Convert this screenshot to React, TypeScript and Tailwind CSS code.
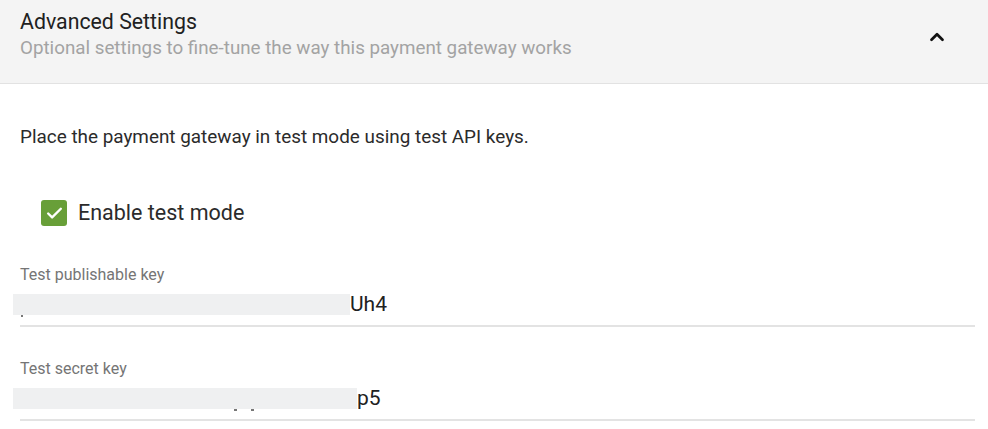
import { ChevronUp, Check } from "lucide-react";

type KeyFieldProps = {
  label: string;
  tail: string;
  maskWidth: string;
  marks: { left: string; w: string }[];
};

function KeyField({ label, tail, maskWidth, marks }: KeyFieldProps) {
  return (
    <div>
      <div className="text-[16px] leading-[20px] text-[#757575]">{label}</div>
      <div className="relative mt-[9px] flex h-[21px] items-center">
        <span className={`-ml-[7px] h-[21px] bg-[#eff0f1] ${maskWidth}`} />
        <span className="text-[21px] leading-[21px] text-[#212121]">{tail}</span>
        {marks.map((m, i) => (
          <span
            key={i}
            className={`absolute top-[21px] h-[2px] bg-[#777] ${m.left} ${m.w}`}
          />
        ))}
      </div>
      <div className="mt-[10px] h-[2px] bg-[#e3e3e3]" />
    </div>
  );
}

export default function App() {
  return (
    <div
      className="min-h-[429px] w-[988px] bg-white"
      style={{ fontFamily: "Roboto, 'Noto Sans', sans-serif" }}
    >
      <div className="flex h-[84px] items-start justify-between border-b border-[#e2e2e2] bg-[#f4f4f4] pl-5 pr-[40px]">
        <div className="pt-[9px]">
          <div className="text-[21.3px] leading-[26px] text-[#212121]">Advanced Settings</div>
          <div className="mt-[1px] text-[18.8px] leading-[24px] text-[#a3a3a3]">
            Optional settings to fine-tune the way this payment gateway works
          </div>
        </div>
        <ChevronUp className="mt-[26px] h-[22px] w-[22px] text-[#111]" strokeWidth={3} />
      </div>

      <div className="pl-5 pr-[13px]">
        <p className="pt-[41px] text-[18.9px] leading-[24px] text-[#2b2b2b]">
          Place the payment gateway in test mode using test API keys.
        </p>

        <label className="mt-[51px] flex items-center gap-[11px] pl-[21px]">
          <span className="flex h-[26px] w-[26px] items-center justify-center rounded-[3px] bg-[#689f38]">
            <Check className="h-[19px] w-[19px] text-white" strokeWidth={3} />
          </span>
          <span className="text-[21.5px] leading-[26px] text-[#2b2b2b]">Enable test mode</span>
        </label>

        <div className="mt-[39px]">
          <KeyField
            label="Test publishable key"
            tail="Uh4"
            maskWidth="w-[337px]"
            marks={[{ left: "left-[1px]", w: "w-[2px]" }]}
          />
          <div className="mt-[32px]">
            <KeyField
              label="Test secret key"
              tail="p5"
              maskWidth="w-[344px]"
              marks={[
                { left: "left-[214px]", w: "w-[3px]" },
                { left: "left-[231px]", w: "w-[3px]" },
              ]}
            />
          </div>
        </div>
      </div>
    </div>
  );
}
